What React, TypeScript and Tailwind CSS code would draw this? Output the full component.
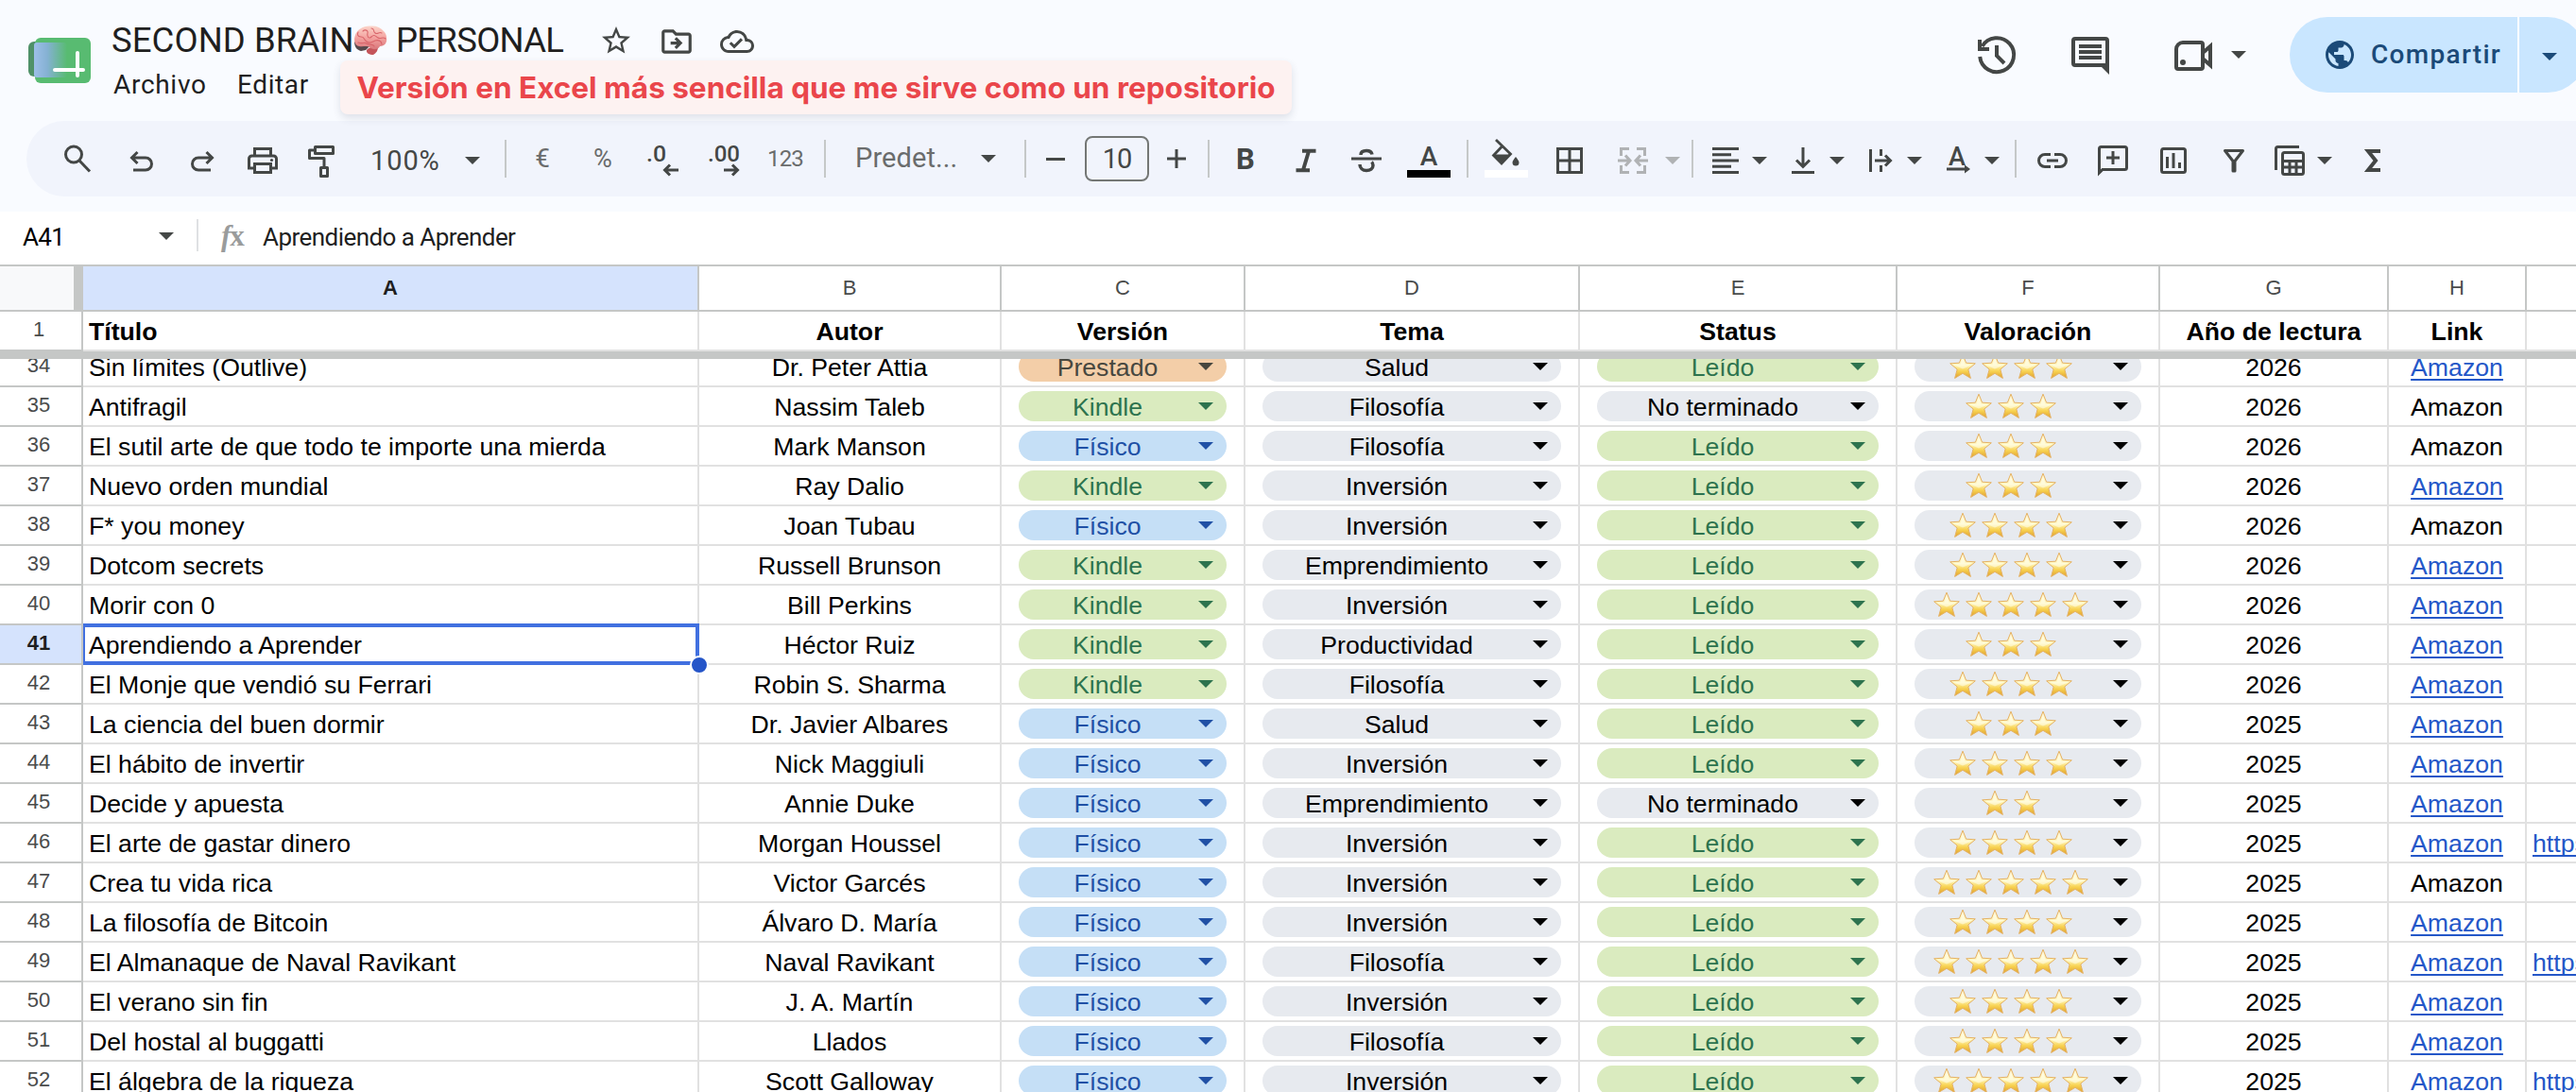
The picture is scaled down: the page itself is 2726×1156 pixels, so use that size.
import React from 'react';
import { MdPublic, MdStarBorder, MdOutlineDriveFileMove, MdOutlineCloudDone } from 'react-icons/md';
import clsx from 'clsx';

type Version = 'Prestado' | 'Kindle' | 'Físico';

interface Book {
  row: number;
  title: string;
  author: string;
  version: Version;
  topic: string;
  done: boolean;
  stars: number;
  year: number;
  linked: boolean;
  url?: boolean;
}

const book = (
  row: number,
  title: string,
  author: string,
  version: Version,
  topic: string,
  stars: number,
  year: number,
  opts: { done?: boolean; linked?: boolean; url?: boolean } = {}
): Book => ({ row, title, author, version, topic, stars, year, done: true, linked: true, ...opts });

const BOOKS: Book[] = [
  book(34, 'Sin límites (Outlive)', 'Dr. Peter Attia', 'Prestado', 'Salud', 4, 2026),
  book(35, 'Antifragil', 'Nassim Taleb', 'Kindle', 'Filosofía', 3, 2026, { done: false, linked: false }),
  book(36, 'El sutil arte de que todo te importe una mierda', 'Mark Manson', 'Físico', 'Filosofía', 3, 2026, { linked: false }),
  book(37, 'Nuevo orden mundial', 'Ray Dalio', 'Kindle', 'Inversión', 3, 2026),
  book(38, 'F* you money', 'Joan Tubau', 'Físico', 'Inversión', 4, 2026, { linked: false }),
  book(39, 'Dotcom secrets', 'Russell Brunson', 'Kindle', 'Emprendimiento', 4, 2026),
  book(40, 'Morir con 0', 'Bill Perkins', 'Kindle', 'Inversión', 5, 2026),
  book(41, 'Aprendiendo a Aprender', 'Héctor Ruiz', 'Kindle', 'Productividad', 3, 2026),
  book(42, 'El Monje que vendió su Ferrari', 'Robin S. Sharma', 'Kindle', 'Filosofía', 4, 2026),
  book(43, 'La ciencia del buen dormir', 'Dr. Javier Albares', 'Físico', 'Salud', 3, 2025),
  book(44, 'El hábito de invertir', 'Nick Maggiuli', 'Físico', 'Inversión', 4, 2025),
  book(45, 'Decide y apuesta', 'Annie Duke', 'Físico', 'Emprendimiento', 2, 2025, { done: false }),
  book(46, 'El arte de gastar dinero', 'Morgan Houssel', 'Físico', 'Inversión', 4, 2025, { url: true }),
  book(47, 'Crea tu vida rica', 'Victor Garcés', 'Físico', 'Inversión', 5, 2025, { linked: false }),
  book(48, 'La filosofía de Bitcoin', 'Álvaro D. María', 'Físico', 'Inversión', 4, 2025),
  book(49, 'El Almanaque de Naval Ravikant', 'Naval Ravikant', 'Físico', 'Filosofía', 5, 2025, { url: true }),
  book(50, 'El verano sin fin', 'J. A. Martín', 'Físico', 'Inversión', 4, 2025),
  book(51, 'Del hostal al buggatti', 'Llados', 'Físico', 'Filosofía', 4, 2025),
  book(52, 'El álgebra de la riqueza', 'Scott Galloway', 'Físico', 'Inversión', 5, 2025, { url: true }),
];

const GRID = 'grid grid-cols-[88px_652px_320px_258px_354px_336px_278px_242px_146px_160px]';

const VERSION_STYLE: Record<Version, string> = {
  Prestado: 'bg-[#f3ceA8] text-[#47473f]',
  Kindle: 'bg-[#daebbf] text-[#2d734e]',
  Físico: 'bg-[#c5dff6] text-[#2050a5]',
};
const GREEN = 'bg-[#daebbf] text-[#2d734e]';
const GREY = 'bg-[#e7eaef] text-black';

/* ---------- small drawings ---------- */

const Caret: React.FC<{ className?: string }> = ({ className }) => (
  <svg viewBox="0 0 16 8" className={clsx('w-4 h-2 shrink-0', className)} fill="currentColor">
    <path d="M0 0h16L8 8z" />
  </svg>
);

const Glyph: React.FC<{ children: React.ReactNode; className?: string }> = ({ children, className }) => (
  <svg
    viewBox="0 0 40 40"
    className={clsx('size-10 shrink-0 overflow-visible', className)}
    fill="none"
    stroke="currentColor"
    strokeWidth="3"
  >
    {children}
  </svg>
);

const Slot: React.FC<{ children: React.ReactNode; className?: string }> = ({ children, className = 'w-16' }) => (
  <button className={clsx('flex items-center justify-center shrink-0 h-10', className)}>{children}</button>
);

const Divider: React.FC<{ className?: string }> = ({ className }) => (
  <div className={clsx('w-0.5 h-10 -mt-1 bg-[#c5c8c8] shrink-0', className)} />
);

const StarEmoji = () => (
  <svg viewBox="0 0 34 32" className="w-[34px] h-8 shrink-0">
    <path
      d="M17 3.2 20.6 12.2 30.3 12.8 22.8 19 25.4 28.4 17 23.3 8.6 28.4 11.2 19 3.7 12.8 13.4 12.2Z"
      fill="url(#star-fill)"
      stroke="#e5b264"
      strokeWidth="1"
      strokeLinejoin="round"
    />
    <path d="M17 6 19.4 13.8 27 14.2 17 18.5 7 14.2 14.6 13.8Z" fill="#fffff0" opacity=".55" />
  </svg>
);

const Brain = () => (
  <svg viewBox="0 0 36 32" className="w-9 h-8 shrink-0 -scale-x-100">
    <path d="M18 21c5 1 12 0 17-4 0 6-3 9-7 10l-5-1Z" fill="#57494c" />
    <path d="M10 22c4 0 10 1 12 4 1 3-3 5-7 5-3-2-5-4-5-9Z" fill="#c4545a" />
    <path
      d="M4 6C7 2 12 0 18 .5 25 0 32 4 34 10c2 5 1 11-4 12-4 1-8-1-11 1-3 3-9 3-11-1C3 22 0 18 1 13 1 10 2 8 4 6Z"
      fill="url(#brain-fill)"
    />
    <path
      d="M6 8c3-2 4 2 7 0s0-5 4-5M2 14c3-3 5 1 8-1s4-4 7-1 5-1 4-4 3-4 5-2M6 20c0-4 4-5 7-4s5 4 9 1 2-5 6-5 4-3 3-5M14 22c1-3 6-1 8-3s5 1 9-1"
      fill="none"
      stroke="#d9666b"
      strokeWidth="1.1"
      strokeLinecap="round"
    />
  </svg>
);

const Defs = () => (
  <svg className="absolute size-0">
    <defs>
      <linearGradient id="star-fill" x1="0" y1="0" x2="0" y2="1">
        <stop offset="0" stopColor="#fff3cf" />
        <stop offset=".45" stopColor="#fff6bd" />
        <stop offset=".7" stopColor="#f8d352" />
        <stop offset="1" stopColor="#dfa02c" />
      </linearGradient>
      <linearGradient id="brain-fill" x1="0" y1="0" x2="0" y2="1">
        <stop offset="0" stopColor="#fbd5ca" />
        <stop offset=".5" stopColor="#f4a3a0" />
        <stop offset="1" stopColor="#d9777b" />
      </linearGradient>
      <linearGradient id="logo-blue" x1="0" y1="0" x2="1" y2="0">
        <stop offset="0" stopColor="#9dbfe8" />
        <stop offset=".4" stopColor="#85b1d3" />
        <stop offset="1" stopColor="#58bb71" />
      </linearGradient>
    </defs>
  </svg>
);

const Logo = () => (
  <svg viewBox="0 0 66 48" className="w-[66px] h-12 shrink-0">
    <rect x="0" y="4" width="30" height="37" rx="6" fill="#4f9168" />
    <rect x="7" y="0" width="59" height="48" rx="6" fill="#58bb71" />
    <rect x="6" y="5" width="35" height="37" rx="3" fill="url(#logo-blue)" />
    <path d="M28 34h30M52 16v24" stroke="#fff" strokeWidth="4" strokeLinecap="round" />
  </svg>
);

/* ---------- header ---------- */

const Header = () => (
  <header className="flex h-32 items-start">
    <div className="pl-[30px] pt-10">
      <Logo />
    </div>
    <div className="pl-[22px] w-[1996px] shrink-0">
      <div className="flex items-center h-[50px] pt-[36px] whitespace-nowrap text-[#1f1f1f] font-[Roboto,sans-serif]">
        <span className="text-[36.5px] leading-[40px] tracking-[0.1px] w-[256px]">SECOND BRAIN</span>
        <Brain />
        <span className="text-[36.5px] leading-[40px] tracking-[-0.7px] ml-[9px] w-[197px]">PERSONAL</span>
        <MdStarBorder className="size-9 text-[#444746] ml-[18px]" />
        <MdOutlineDriveFileMove className="size-[38px] text-[#444746] ml-[27px] mt-0.5" />
        <MdOutlineCloudDone className="size-9 text-[#444746] ml-[27px] mt-0.5" />
      </div>
      <div className="flex items-start h-[60px] pt-[14px] whitespace-nowrap">
        <nav className="flex text-[28px] leading-[36px] pt-[8px] pl-[2px] text-[#1f1f1f] font-[Roboto,sans-serif]">
          <span className="w-[131px] tracking-[0.7px]">Archivo</span>
          <span className="w-[109px] tracking-[0.6px]">Editar</span>
        </nav>
        <div className="h-[57px] w-[1007px] rounded-lg bg-[#fdf2f1] shadow-[0_4px_8px_rgba(60,64,90,0.14)] text-center font-[Inter,sans-serif] font-bold text-[31.5px] leading-[58px] text-[#ea464b]">
          Versión en Excel más sencilla que me sirve como un repositorio
        </div>
      </div>
    </div>
    <div className="flex -ml-[3px] pt-[18px] text-[#444746] shrink-0">
      <div className="flex items-center h-20">
        <svg viewBox="0 0 48 48" className="size-12" fill="none" stroke="currentColor" strokeWidth="4">
          <path d="M6.2 26a18 18 0 1 0 2.4-11M6 8v10h10M24 14v11l8 8" />
        </svg>
        <svg viewBox="0 0 48 48" className="size-12 ml-[51px]">
          <path d="M8 5h32a4 4 0 0 1 4 4v36l-8-8H8a4 4 0 0 1-4-4V9a4 4 0 0 1 4-4Zm0 4v24h32V9Z" fill="currentColor" fillRule="evenodd" />
          <path d="M12 15h24M12 21h24M12 27h24" stroke="currentColor" strokeWidth="4" />
        </svg>
        <svg viewBox="0 0 48 48" className="size-12 ml-[61px]" fill="none" stroke="currentColor" strokeWidth="4">
          <path d="M13 11h19a2 2 0 0 1 2 2v24a2 2 0 0 1-2 2H8a2 2 0 0 1-2-2V18a7 7 0 0 1 7-7ZM34 22l8-7v20l-8-7" />
          <circle cx="13" cy="32" r="3" fill="currentColor" stroke="none" />
        </svg>
        <Caret className="ml-4" />
      </div>
      <div className="flex h-20 w-[313px] shrink-0 ml-[46px] rounded-full bg-[#c9e6ff] text-[#1b4a78]">
        <div className="flex items-center w-[241px] pl-9">
          <MdPublic className="size-9 ml-[-1px]" />
          <span className="ml-[15px] font-[Roboto,sans-serif] font-medium text-[28px] tracking-[1.3px]">Compartir</span>
        </div>
        <div className="w-0.5 bg-white" />
        <div className="flex items-center pl-6 pt-1">
          <Caret />
        </div>
      </div>
    </div>
  </header>
);

/* ---------- toolbar ---------- */

const Toolbar = () => (
  <div className="ml-7 h-20 rounded-l-full bg-[#f1f4fc] flex items-center pt-1 pl-[26px] text-[#444746] font-[Roboto,sans-serif] whitespace-nowrap">
    <Slot>
      <Glyph>
        <circle cx="12" cy="13.5" r="8.5" />
        <path d="m18 20 11 11.5" />
      </Glyph>
    </Slot>
    <Slot>
      <Glyph>
        <path d="M9 17h15a6.5 6.5 0 0 1 0 13H11M15.5 11 9.5 17l6 6" />
      </Glyph>
    </Slot>
    <Slot>
      <Glyph>
        <path d="M31 17H16a6.5 6.5 0 0 0 0 13h13M24.5 11l6 6-6 6" />
      </Glyph>
    </Slot>
    <Slot>
      <Glyph>
        <path d="M11.5 14V7.5h17V14M11.5 28H5.5V18a3 3 0 0 1 3-3h23a3 3 0 0 1 3 3v10h-6M11.5 23.5h17v9h-17Z" />
        <circle cx="29.5" cy="19.5" r="1.6" fill="currentColor" stroke="none" />
      </Glyph>
    </Slot>
    <Slot>
      <Glyph>
        <path d="M11.5 5.5h19v7h-19ZM11.5 9h-6v8.5h15.5V26M17.5 27.5h7v9h-7Z" strokeLinejoin="round" />
      </Glyph>
    </Slot>
    <div className="flex items-center w-[160px] pl-[18px] text-[29px]">
      <span className="w-[100px] tracking-[0.9px] pt-0.5">100%</span>
      <Caret />
    </div>
    <Divider />
    <Slot className="w-16 ml-1.5 text-[28px] text-[#6a6c6c] -mt-1">€</Slot>
    <Slot className="w-16 text-[27px] text-[#6a6c6c] -mt-1">%</Slot>
    <Slot>
      <Glyph>
        <text x="2" y="21" fontSize="24" fontWeight="500" fill="currentColor" stroke="none" textLength="21" lengthAdjust="spacingAndGlyphs">.0</text>
        <path d="M36 30H22M27 24.5 21.5 30l5.5 5.5" />
      </Glyph>
    </Slot>
    <Slot>
      <Glyph>
        <text x="3" y="21" fontSize="24" fontWeight="500" fill="currentColor" stroke="none" textLength="34" lengthAdjust="spacingAndGlyphs">.00</text>
        <path d="M20 30h14M29 24.5l5.5 5.5-5.5 5.5" />
      </Glyph>
    </Slot>
    <Slot className="w-16 text-[24px] text-[#6a6c6c] -mt-1 pl-0.5 tracking-[-0.9px]">123</Slot>
    <Divider className="ml-2.5" />
    <span className="w-[133px] ml-[31px] -mt-1 text-[29px] tracking-[0.1px] text-[#6a6c6c]">Predet...</span>
    <Caret className="-mt-1" />
    <Divider className="ml-[30px]" />
    <Slot className="w-[62px] -mt-1">
      <div className="w-5 h-[3px] bg-[#444746]" />
    </Slot>
    <div className="w-[68px] h-12 -mt-1 rounded-lg border-2 border-[#747775] text-center text-[29px] leading-[45px] tracking-[-1px] shrink-0">10</div>
    <Slot className="w-[58px] -mt-1">
      <svg viewBox="0 0 20 20" className="size-5" stroke="currentColor" strokeWidth="3">
        <path d="M0 10h20M10 0v20" />
      </svg>
    </Slot>
    <Divider className="ml-1" />
    <Slot className="w-16 ml-1.5 font-bold text-[31px] -mt-0.5">B</Slot>
    <Slot>
      <Glyph>
        <path d="M16 9.8h14.5M9.5 30.2H24M23 10 17 30" strokeWidth="4" />
      </Glyph>
    </Slot>
    <Slot>
      <Glyph>
        <path d="M4 18h32" />
        <path d="M14 14c0-3 2.500-4.500 6-4.500s5.500 1.500 6 4M13 24c0 4 3 6.500 7 6.500s7-2 7-5.500c0-1.500-.5-2.500-1.500-3.500" strokeWidth="3.5" />
      </Glyph>
    </Slot>
    <Slot>
      <Glyph className="ml-1">
        <text x="20" y="25" textAnchor="middle" fontSize="28" fontWeight="500" fill="currentColor" stroke="none">A</text>
        <path d="M-3 30h46v8H-3Z" fill="#000" stroke="none" />
      </Glyph>
    </Slot>
    <Divider className="ml-2.5" />
    <Slot className="w-16 ml-2">
      <Glyph>
        <path d="M9 -2 24.5 13 15 23 6.500 14.500 15.500 5" strokeWidth="2.8" />
        <path d="M6 13.500h18.500L15 23Z" fill="currentColor" stroke="none" />
        <path d="M30 16c2 2.500 3.500 4.500 3.500 6a3.500 3.500 0 0 1-7 0c0-1.500 1.500-3.500 3.500-6Z" fill="currentColor" stroke="none" />
        <path d="M-3 30h46v8H-3Z" fill="#fff" stroke="none" />
      </Glyph>
    </Slot>
    <Slot className="w-[70px]">
      <Glyph>
        <path d="M7.500 7.500h25v25h-25ZM20 7v26M7 20h26" />
      </Glyph>
    </Slot>
    <Slot className="w-16 text-[#b0b2b4]">
      <Glyph>
        <path d="M16 7.500H7.500V15M24 7.500h8.500V15M16 32.500H7.500V25M24 32.500h8.500V25M4 20h11M12 14.500l5 5.500-5 5.500M36 20H25M28 14.500 23 20l5 5.500" />
      </Glyph>
    </Slot>
    <Caret className="ml-0.5 text-[#b0b2b4]" />
    <Divider className="ml-3" />
    <Glyph className="ml-3.5">
      <path d="M6 7.500h28M6 13.800h20M6 20h28M6 26.300h20M6 32.500h28" />
    </Glyph>
    <Caret className="ml-2" />
    <Glyph className="ml-[18px]">
      <path d="M8 32.500h24M20 6v20M13 19.500l7 7 7-7" />
    </Glyph>
    <Caret className="ml-2" />
    <Glyph className="ml-[18px]">
      <path d="M9.500 8v24M20.500 8v7M20.500 25v7M14 20h16M25 14.500l5.500 5.500-5.500 5.500" />
    </Glyph>
    <Caret className="ml-2" />
    <Glyph className="ml-[18px]">
      <text x="19" y="25" textAnchor="middle" fontSize="27" fontWeight="500" fill="currentColor" stroke="none">A</text>
      <path d="M8 29h20" />
      <path d="m27 24.500 6 4.500-6 4.500Z" fill="currentColor" stroke="none" />
    </Glyph>
    <Caret className="ml-2" />
    <Divider className="ml-4" />
    <Slot className="w-16 ml-1.5">
      <Glyph>
        <path d="M18 13.500h-6a6.500 6.500 0 0 0 0 13h6M22 13.500h6a6.500 6.500 0 0 1 0 13h-6M14 20h12" />
      </Glyph>
    </Slot>
    <Slot>
      <Glyph>
        <path d="M5.500 33V7.500a2 2 0 0 1 2-2h25a2 2 0 0 1 2 2v20a2 2 0 0 1-2 2H9ZM20 10v14M13 17h14" />
      </Glyph>
    </Slot>
    <Slot>
      <Glyph>
        <rect x="7.5" y="7.5" width="25" height="25" rx="2" />
        <path d="M13.500 16v12M20 12v16M26.500 22v6" />
      </Glyph>
    </Slot>
    <Slot>
      <Glyph>
        <path d="M10.500 9.500h19L21 20.500V31h-2V20.500Z" strokeLinejoin="round" />
      </Glyph>
    </Slot>
    <Glyph className="ml-[7px]">
      <path d="M30 5.500H7.500a2 2 0 0 0-2 2V30" />
      <rect x="12.5" y="11.5" width="22" height="23" rx="2" />
      <path d="M12 20.500h22M12 27h22M20 20v14M27 20v14" />
    </Glyph>
    <Caret className="ml-[9px]" />
    <Glyph className="ml-[23px]">
      <path d="M28 10H15l8 10-8 10h13" strokeWidth="4" />
    </Glyph>
  </div>
);

const FormulaBar = () => (
  <div className="flex items-center h-14 mt-4 bg-white font-[Roboto,sans-serif] text-[26px] leading-[36px]">
    <span className="w-[168px] pl-6 pb-0.5 tracking-[-0.6px] text-black">A41</span>
    <Caret className="text-[#444746] -mt-1" />
    <div className="w-0.5 h-[34px] ml-6 bg-[#dfe1e3] -mt-1.5" />
    <span className="flex w-[68px] pl-[24px] pb-1 font-['Liberation_Serif',serif] font-bold text-[31px] leading-[34px] text-[#9a9c9c]">
      <i className="-mr-px">f</i>
      <span>x</span>
    </span>
    <span className="tracking-[-0.55px] pb-0.5 text-[#1f1f1f]">Aprendiendo a Aprender</span>
  </div>
);

/* ---------- sheet ---------- */

const Chip: React.FC<{ tone: string; children: React.ReactNode }> = ({ tone, children }) => (
  <div className="px-[18px] pt-1 border-r-2 border-b-2 border-[#e1e1e1]">
    <div className={clsx('flex items-center h-8 rounded-full pr-3.5', tone)}>
      <div className="flex-1 flex justify-center h-8 leading-[34px] pr-0.5">{children}</div>
      <Caret />
    </div>
  </div>
);

const Cell: React.FC<{ children?: React.ReactNode; className?: string }> = ({ children, className }) => (
  <div className={clsx('border-r-2 border-b-2 border-[#e1e1e1] leading-[42px] text-center', className)}>{children}</div>
);

const RowNumber: React.FC<{ n: number; active?: boolean }> = ({ n, active }) => (
  <div
    className={clsx(
      'border-r-2 border-b-2 border-[#c5c7c6] pr-1 text-center text-[22px] leading-[37px]',
      active ? 'bg-[#d5e3fd] font-bold text-[#1f1f1f]' : 'text-[#4a4c4c]'
    )}
  >
    {n}
  </div>
);

const LINK = 'text-[#2457c8] underline decoration-2 underline-offset-[3px] [text-decoration-skip-ink:none]';

const BookRow: React.FC<{ item: Book }> = ({ item }) => {
  const active = item.row === 41;
  return (
    <div className={clsx(GRID, 'grid-rows-[42px]')}>
      <RowNumber n={item.row} active={active} />
      <Cell className="relative text-left pl-1.5">
        {item.title}
        {active && (
          <>
            <div className="absolute left-0 -top-0.5 -right-0.5 -bottom-0.5 border-4 border-l-2 border-[#4170e0]" />
            <div className="absolute z-10 -right-3 -bottom-3 size-5 rounded-full border-2 border-white bg-[#2555c8]" />
          </>
        )}
      </Cell>
      <Cell>{item.author}</Cell>
      <Chip tone={VERSION_STYLE[item.version]}>{item.version}</Chip>
      <Chip tone={GREY}>{item.topic}</Chip>
      <Chip tone={item.done ? GREEN : GREY}>{item.done ? 'Leído' : 'No terminado'}</Chip>
      <Chip tone={GREY}>
        <div className="flex -ml-1">
          {Array.from({ length: item.stars }, (_, i) => (
            <StarEmoji key={i} />
          ))}
        </div>
      </Chip>
      <Cell>{item.year}</Cell>
      <Cell>{item.linked ? <a className={LINK}>Amazon</a> : 'Amazon'}</Cell>
      <Cell className="text-left pl-1.5">{item.url && <a className={LINK}>https://</a>}</Cell>
    </div>
  );
};

const Sheet = () => (
  <main className="bg-white border-t-2 border-[#c5c7c6] font-['Liberation_Sans',Arial,sans-serif] text-[26.67px] text-black">
    <div className={clsx(GRID, 'grid-rows-[48px] text-[22px] leading-[45px] text-center text-[#4a4c4c]')}>
      <div className="bg-[#f8f9fa] border-r-[10px] border-b-2 border-[#c5c7c6]" />
      {['A', 'B', 'C', 'D', 'E', 'F', 'G', 'H', ''].map((letter) => (
        <div
          key={letter}
          className={clsx(
            'border-r-2 border-b-2 border-[#c5c7c6]',
            letter === 'A' && 'bg-[#d5e3fd] font-bold text-[#1f1f1f]'
          )}
        >
          {letter}
        </div>
      ))}
    </div>
    <div className={clsx(GRID, 'grid-rows-[42px] font-bold')}>
      <div className="border-r-2 border-b-2 border-[#c5c7c6] pr-1 text-center text-[22px] leading-[37px] font-normal text-[#4a4c4c]">1</div>
      <Cell className="text-left pl-1.5">Título</Cell>
      {['Autor', 'Versión', 'Tema', 'Status', 'Valoración', 'Año de lectura', 'Link', ''].map((name) => (
        <Cell key={name}>{name}</Cell>
      ))}
    </div>
    <div className="h-2 bg-[#c5c7c6]" />
    {/* first scrolled row slides under the frozen one */}
    <div className="overflow-hidden">
      <div className="-mt-3">
        {BOOKS.map((item) => (
          <BookRow key={item.row} item={item} />
        ))}
      </div>
    </div>
  </main>
);

const App: React.FC = () => (
  <div className="w-[2726px] h-[1156px] overflow-hidden bg-[#f9fbff]">
    <Defs />
    <Header />
    <Toolbar />
    <FormulaBar />
    <Sheet />
  </div>
);

export default App;
